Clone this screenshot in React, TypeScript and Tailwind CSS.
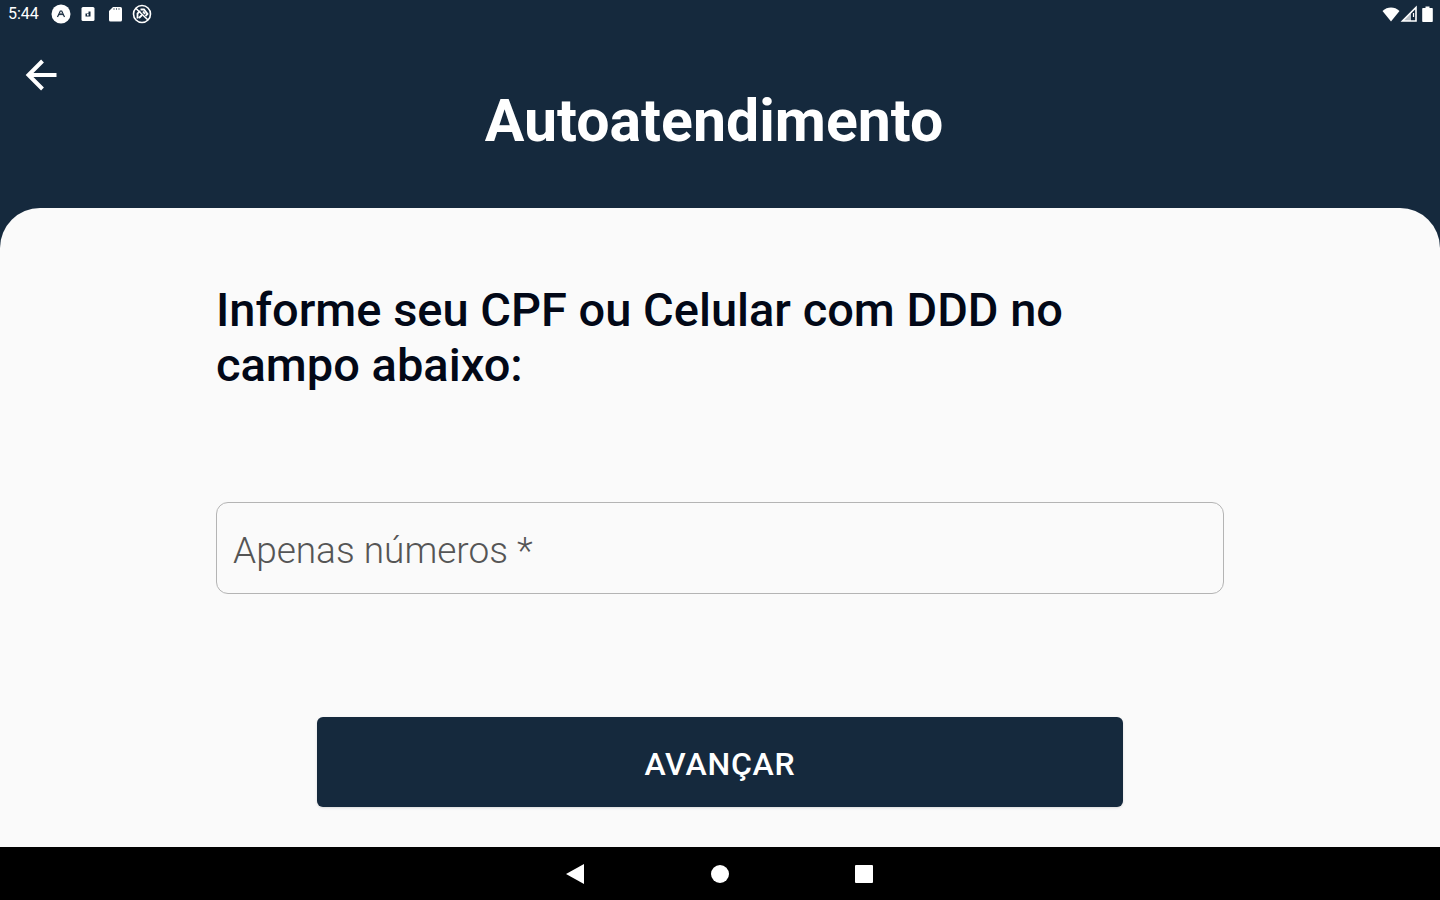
import React, { useState } from 'react';

function StatusBar() {
  return (
    <div className="flex h-7 items-center justify-between pl-2 pr-1 text-white">
      <div className="flex items-center gap-[7px]">
        <span className="w-9 text-base leading-7">5:44</span>
        <svg viewBox="0 0 20 20" className="h-5 w-5">
          <circle cx="10" cy="10" r="9.5" fill="currentColor" />
          <path d="M6.5 13 9.300 7h1.400L13.500 13M8.500 11 10 9.800l1.500 1.200" fill="none" stroke="#15293d" strokeWidth="1.200" />
        </svg>
        <svg viewBox="0 0 20 20" className="h-5 w-5">
          <rect x="3.500" y="3" width="13" height="14" rx="1.500" fill="currentColor" />
          <path d="M7.500 12.500v-3h3v-2h2v5z" fill="#15293d" />
          <rect x="9" y="10" width="1.600" height="1.600" fill="currentColor" />
        </svg>
        <svg viewBox="0 0 20 20" className="h-5 w-5">
          <path d="M8 3h7.500A1.500 1.500 0 0 1 17 4.500v11.500a1.500 1.500 0 0 1-1.500 1.500h-10A1.500 1.500 0 0 1 4 16V7z" fill="currentColor" />
          <path d="M9 4v2M11.500 4v2M14 4v2" stroke="#15293d" strokeWidth="0.600" />
        </svg>
        <svg viewBox="0 0 20 20" className="h-5 w-5" fill="none" stroke="currentColor">
          <circle cx="10" cy="10" r="8.500" strokeWidth="1.600" />
          <path d="M4 4.500 16 16" strokeWidth="1.600" />
          <path d="M5.500 14.500V9.500L8 7M8.500 5.500h3.500l3.500 4.500-2 2M7 14l3-3M11 7.500l2 2.500" strokeWidth="1.800" />
        </svg>
      </div>
      <div className="flex items-center">
        <svg viewBox="0 0 18 18" className="h-[18px] w-[18px]">
          <path d="M9 16.500.5 6C3 3.600 6 2.500 9 2.500s6 1.100 8.500 3.500z" fill="currentColor" />
        </svg>
        <svg viewBox="0 0 18 18" className="h-[18px] w-[18px]">
          <path d="M16 2.500V16H2.500z" fill="none" stroke="currentColor" strokeWidth="1.600" />
          <path d="M11 8v8H3z" fill="currentColor" fillOpacity="0.700" />
          <path d="M13.500 8v4" stroke="currentColor" strokeWidth="1.200" />
        </svg>
        <svg viewBox="0 0 18 18" className="h-[18px] w-[18px]">
          <path d="M7.500 1.500h4V3H14a.8.8 0 0 1 .8.8v12.400a.8.8 0 0 1-.8.8H5a.8.8 0 0 1-.8-.8V3.800A.8.8 0 0 1 5 3h2.500z" fill="currentColor" />
        </svg>
      </div>
    </div>
  );
}

function NavigationBar() {
  return (
    <nav className="flex h-[53px] items-center justify-center gap-[120px] bg-black text-white">
      <button type="button" aria-label="Voltar">
        <svg viewBox="0 0 24 24" className="h-6 w-6">
          <path d="M2 12 20 2v20z" fill="currentColor" />
        </svg>
      </button>
      <button type="button" aria-label="Início">
        <svg viewBox="0 0 24 24" className="h-6 w-6">
          <circle cx="12" cy="12" r="9" fill="currentColor" />
        </svg>
      </button>
      <button type="button" aria-label="Recentes">
        <svg viewBox="0 0 24 24" className="h-6 w-6">
          <rect x="3" y="3" width="18" height="18" rx="1" fill="currentColor" />
        </svg>
      </button>
    </nav>
  );
}

export default function App() {
  const [documento, setDocumento] = useState('');

  return (
    <div className="flex min-h-screen flex-col bg-[#15293d] font-[Roboto,sans-serif]">
      <StatusBar />

      <header className="flex flex-col px-5 pb-[62px] pt-6 text-white">
        <button type="button" aria-label="Voltar" className="h-11 w-11 self-start">
          <svg viewBox="0 0 44 44" className="h-11 w-11" fill="none" stroke="currentColor" strokeWidth="4">
            <path d="M36.500 23H9M22.500 9 8.500 23l14 14" />
          </svg>
        </button>
        <h1 className="pr-3 text-center text-[59px] font-bold leading-[50px]">Autoatendimento</h1>
      </header>

      <main className="flex grow flex-col items-center rounded-t-[40px] bg-[#fafafa] pt-[74px]">
        <form className="flex w-[70%] flex-col items-center" onSubmit={(e) => e.preventDefault()}>
          <label htmlFor="documento" className="w-full pr-10 text-[47px] font-medium leading-[55px] text-[#020817]">
            Informe seu CPF ou Celular com DDD no campo abaixo:
          </label>
          <input
            id="documento"
            type="text"
            inputMode="numeric"
            value={documento}
            onChange={(e) => setDocumento(e.target.value.replace(/\D/g, ''))}
            placeholder="Apenas números *"
            className="mt-[110px] h-[92px] w-full rounded-xl border border-[#b4b4b4] bg-transparent px-4 pt-1 text-[37px] font-light text-black placeholder:text-[#555] focus:outline-none"
          />
          <button
            type="submit"
            className="mb-10 mt-[123px] h-[90px] w-4/5 rounded-md bg-[#15293d] pt-1 text-[32px] font-medium tracking-wide text-white shadow"
          >
            AVANÇAR
          </button>
        </form>
      </main>

      <NavigationBar />
    </div>
  );
}
